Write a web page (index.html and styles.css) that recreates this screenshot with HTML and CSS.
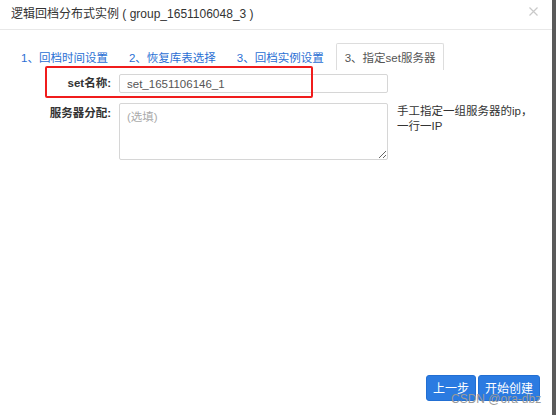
FILE: index.html
```html
<!DOCTYPE html>
<html lang="zh-CN">
<head>
<meta charset="utf-8">
<title>逻辑回档分布式实例</title>
<link rel="stylesheet" href="styles.css">
</head>
<body>
<div class="page">
  <div class="dialog">
    <div class="dialog-header">
      <span class="dialog-title">逻辑回档分布式实例 ( group_1651106048_3 )</span>
      <span class="close" aria-label="关闭">
        <svg width="9" height="9" viewBox="0 0 9 9"><path d="M0.5 0.5L8.5 8.5M8.5 0.5L0.5 8.5" stroke="#c9c9c9" stroke-width="1.2" fill="none"/></svg>
      </span>
    </div>
    <div class="dialog-body">
      <ul class="tabs">
        <li class="tab">1、回档时间设置</li>
        <li class="tab">2、恢复库表选择</li>
        <li class="tab">3、回档实例设置</li>
        <li class="tab active">3、指定set服务器</li>
      </ul>
      <div class="form">
        <label class="label">set名称:</label>
        <input class="input" type="text" value="set_1651106146_1">
        <span></span>
        <label class="label label-top">服务器分配:</label>
        <textarea class="textarea" placeholder="(选填)"></textarea>
        <p class="help">手工指定一组服务器的ip，<br>一行一IP</p>
      </div>
    </div>
    <div class="dialog-footer">
      <button class="btn">上一步</button>
      <button class="btn">开始创建</button>
    </div>
    <div class="highlight"></div>
    <div class="watermark">CSDN @ora-dbz</div>
  </div>
</div>
</body>
</html>
```
FILE: styles.css
```css
* { box-sizing: border-box; }
html, body { margin: 0; padding: 0; background: #fff; }
body {
  font-family: "Liberation Sans", "Noto Sans CJK SC", sans-serif;
  color: #333;
}
.page { width: 558px; height: 415px; display: flex; }
.dialog {
  position: relative;
  width: 556px;
  height: 415px;
  border-right: 4px solid #5a5a5a;
  display: flex;
  flex-direction: column;
}
.dialog-header {
  height: 30px;
  border-bottom: 1px solid #e8e8e8;
  display: flex;
  justify-content: space-between;
  padding: 0 14px 0 11px;
}
.dialog-title {
  font-size: 12px;
  line-height: 29px;
  color: #333;
}
.close { display: flex; padding-top: 7px; }
.dialog-body { padding: 13px 12px 0; }
.tabs {
  list-style: none;
  margin: 0;
  padding: 0;
  display: flex;
  height: 27px;
}
.tab {
  font-size: 11.5px;
  line-height: 25px;
  padding: 2px 8px 0;
  margin-right: 3px;
  color: #2b6fd4;
  border: 1px solid transparent;
  border-bottom: 0;
  white-space: nowrap;
}
.tab.active {
  color: #555;
  border-color: #ddd;
  border-radius: 2px 2px 0 0;
}
.form {
  margin-top: 4px;
  display: grid;
  grid-template-columns: 99px 269px auto;
  column-gap: 8px;
  row-gap: 10px;
  align-items: start;
}
.label {
  font-size: 11.5px;
  font-weight: bold;
  line-height: 19px;
  text-align: right;
  color: #333;
}
.label-top { padding-top: 1px; }
.input {
  height: 19px;
  border: 1px solid #d6d6d6;
  border-radius: 2px;
  padding: 0 7px;
  font-family: "Liberation Sans", sans-serif;
  font-size: 11.5px;
  color: #555;
  outline: none;
}
.textarea {
  height: 57px;
  border: 1px solid #d6d6d6;
  border-radius: 2px;
  padding: 5px 7px;
  font-family: "Liberation Sans", "Noto Sans CJK SC", sans-serif;
  font-size: 11.5px;
  line-height: 16px;
  color: #555;
  outline: none;
  resize: both;
  display: block;
}
.textarea::placeholder { color: #aaa; }
.help {
  margin: 0 0 0 1px;
  padding-top: 1px;
  font-size: 11.5px;
  line-height: 15px;
  color: #333;
  width: 140px;
}
.dialog-footer {
  margin-top: auto;
  padding: 0 12px 14px;
  display: flex;
  justify-content: flex-end;
  gap: 2px;
}
.btn {
  height: 26px;
  padding: 0 6px;
  background: #2b7be1;
  border: 1px solid #226fd3;
  border-radius: 3px;
  color: #fff;
  font-family: "Noto Sans CJK SC", sans-serif;
  font-size: 12px;
  line-height: 24px;
}
.highlight {
  position: absolute;
  left: 45px;
  top: 66px;
  width: 268px;
  height: 32px;
  border: 2px solid #f01c1c;
  border-radius: 2px;
}
.watermark {
  position: absolute;
  left: 451px;
  top: 392px;
  font-family: "Liberation Sans", sans-serif;
  font-size: 12px;
  line-height: 14px;
  color: #9a9a9a;
  white-space: nowrap;
}
```
